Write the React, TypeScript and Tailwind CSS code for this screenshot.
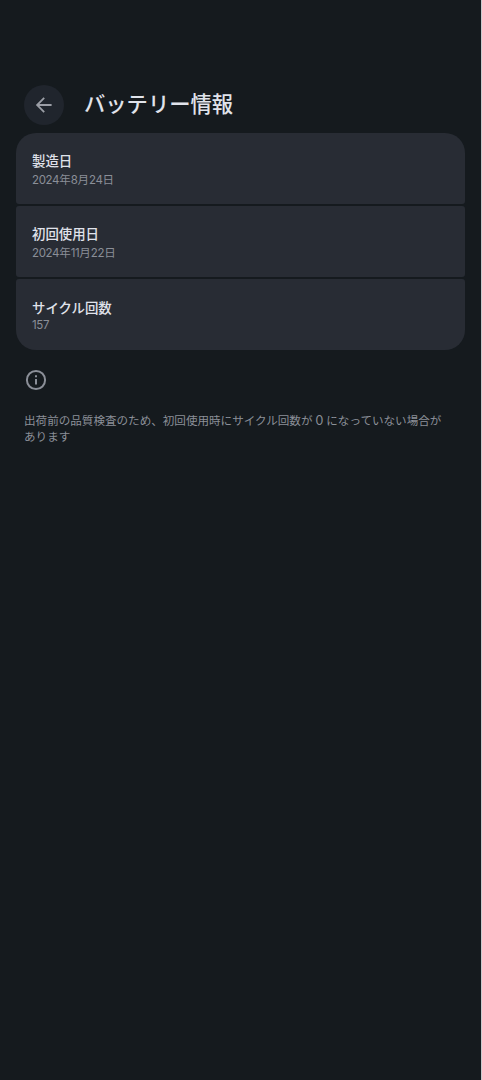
import React from 'react';

interface BatteryRow {
  label: string;
  value: string;
  className: string;
}

const rows: BatteryRow[] = [
  { label: '製造日', value: '2024年8月24日', className: 'pt-[18px] leading-[18px]' },
  { label: '初回使用日', value: '2024年11月22日', className: 'pt-[18px] leading-[18px]' },
  { label: 'サイクル回数', value: '157', className: 'pt-[19px] leading-[14px]' },
];

// Digits get slightly tighter spacing than the kanji around them
const DateText: React.FC<{ value: string }> = ({ value }) => (
  <>
    {value.split(/(\d+)/).map((part, index) => (
      <span key={index} className={/\d/.test(part) ? 'tracking-[-0.35px]' : ''}>
        {part}
      </span>
    ))}
  </>
);

const BackIcon: React.FC = () => (
  <svg className="h-5 w-5" viewBox="0 0 20 20" fill="none" stroke="currentColor" strokeWidth="1.8">
    <path d="M17.6 10H3.4M10.2 2.9L3.1 10L10.2 17.1" />
  </svg>
);

const InfoIcon: React.FC = () => (
  <svg className="h-6 w-6" viewBox="0 0 24 24" fill="none" stroke="currentColor" strokeWidth="2">
    <circle cx="12" cy="12" r="9.1" />
    <path d="M12 11V16.5M12 7.2V9.3" />
  </svg>
);

export default function App() {
  return (
    <div className="min-h-screen border-r border-[#c9cbcd] bg-[#151a1e] pt-[85px] font-['Inter','Noto_Sans_CJK_JP',sans-serif]">
      <header className="flex h-10 items-center pl-6">
        <button
          type="button"
          aria-label="戻る"
          className="flex h-10 w-10 items-center justify-center rounded-full bg-[#20252d] text-[#9b9ea6]"
        >
          <BackIcon />
        </button>
        <h1 className="mb-0.5 ml-5 text-[21.3px] leading-[38px] font-medium text-[#e0e3eb]">バッテリー情報</h1>
      </header>

      <main className="px-4 pt-2">
        <div className="flex flex-col gap-0.5 overflow-hidden rounded-[20px]">
          {rows.map((row) => (
            <section key={row.label} className={`h-[71px] rounded-[3px] bg-[#282c34] px-4 ${row.className}`}>
              <h2 className="text-[13.4px] leading-5 font-medium text-[#e0e3eb]">{row.label}</h2>
              <p className="text-[11.5px] text-[#8b8f98]">
                <DateText value={row.value} />
              </p>
            </section>
          ))}
        </div>

        <div className="px-2 pt-[18px] text-[#8b8f98]">
          <InfoIcon />
          <p className="mt-[21px] text-[11.57px] leading-4">
            出荷前の品質検査のため、初回使用時にサイクル回数が{' '}
            <span className="font-['Lato'] text-[12.5px] leading-none">0</span> になっていない場合が
            <br />
            あります
          </p>
        </div>
      </main>
    </div>
  );
}
